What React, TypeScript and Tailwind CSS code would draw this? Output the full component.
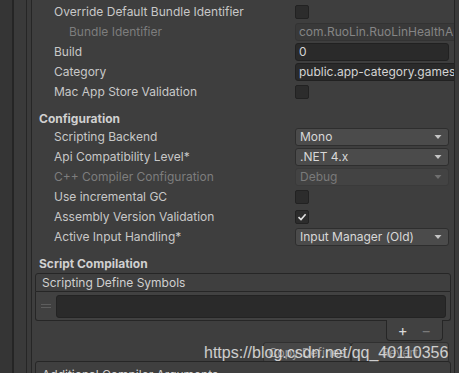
import React from "react";

const font = { fontFamily: "Inter, 'Noto Sans', sans-serif" };

function Row({ label, indent = 22, disabled = false, children }: { label: string; indent?: number; disabled?: boolean; children?: React.ReactNode }) {
  return (
    <div className="flex h-[20px] items-center">
      <div
        className={`w-[263px] shrink-0 truncate text-[12px] leading-[20px] ${disabled ? "text-[#7d7d7d]" : "text-[#c8c8c8]"}`}
        style={{ paddingLeft: indent }}
      >
        {label}
      </div>
      <div className="flex flex-1 items-center pr-[5px]">{children}</div>
    </div>
  );
}

function Check({ checked = false }: { checked?: boolean }) {
  return (
    <div className="flex h-[14px] w-[14px] items-center justify-center rounded-[2px] border border-[#222] bg-[#2c2c2c]">
      {checked && (
        <svg width="10" height="10" viewBox="0 0 10 10">
          <path d="M1.5 5.2 L4 7.6 L8.6 2.2" stroke="#e0e0e0" strokeWidth="1.6" fill="none" />
        </svg>
      )}
    </div>
  );
}

function TextField({ value, disabled = false }: { value: string; disabled?: boolean }) {
  return (
    <div
      className={`h-[18px] w-full overflow-hidden whitespace-nowrap rounded-[3px] border px-[3px] text-[12px] leading-[16px] ${
        disabled ? "border-[#333] bg-[#393939] text-[#858585]" : "border-[#212121] bg-[#2a2a2a] text-[#d4d4d4]"
      }`}
    >
      {value}
    </div>
  );
}

function Dropdown({ value, disabled = false }: { value: string; disabled?: boolean }) {
  return (
    <div
      className={`flex h-[18px] w-full items-center justify-between rounded-[3px] border pl-[4px] pr-[6px] text-[12px] leading-[16px] ${
        disabled ? "border-[#3a3a3a] bg-[#434343] text-[#7a7a7a]" : "border-[#2e2e2e] bg-[#4b4b4b] text-[#d8d8d8]"
      }`}
    >
      <span>{value}</span>
      <svg width="8" height="6" viewBox="0 0 8 6">
        <path d="M0.5 1 L7.5 1 L4 5 Z" fill={disabled ? "#6e6e6e" : "#c4c4c4"} />
      </svg>
    </div>
  );
}

export default function App() {
  return (
    <div className="relative flex h-[373px] w-[459px] overflow-hidden bg-[#3c3c3c]" style={font}>
      <div className="w-[12px] shrink-0 bg-[#353535]" />
      <div className="w-[2px] shrink-0 bg-[#252525]" />
      <div className="w-[12px] shrink-0 bg-[#3a3a3a]" />
      <div className="w-[1px] shrink-0 bg-[#262626]" />
      <div className="w-[4px] shrink-0 bg-[#3b3b3b]" />
      <div className="w-[1px] shrink-0 bg-[#262626]" />
      <div className="flex w-[422px] shrink-0 flex-col bg-[#3e3e3e] pt-[2px]">
        <Row label="Override Default Bundle Identifier">
          <Check />
        </Row>
        <Row label="Bundle Identifier" indent={37} disabled>
          <TextField value="com.RuoLin.RuoLinHealthApp" disabled />
        </Row>
        <Row label="Build">
          <TextField value="0" />
        </Row>
        <Row label="Category">
          <TextField value="public.app-category.games" />
        </Row>
        <Row label="Mac App Store Validation">
          <Check />
        </Row>
        <div className="h-[25px] pl-[7px] pt-[8px] text-[12px] font-bold leading-[18px] text-[#d0d0d0]">Configuration</div>
        <Row label="Scripting Backend">
          <Dropdown value="Mono" />
        </Row>
        <Row label="Api Compatibility Level*">
          <Dropdown value=".NET 4.x" />
        </Row>
        <Row label="C++ Compiler Configuration" disabled>
          <Dropdown value="Debug" disabled />
        </Row>
        <Row label="Use incremental GC">
          <Check />
        </Row>
        <Row label="Assembly Version Validation">
          <Check checked />
        </Row>
        <Row label="Active Input Handling*">
          <Dropdown value="Input Manager (Old)" />
        </Row>
        <div className="h-[27px] pl-[7px] pt-[8px] text-[12px] font-bold leading-[18px] text-[#d0d0d0]">Script Compilation</div>
        <div className="ml-[3px] mr-[3px] flex flex-col">
          <div className="h-[19px] rounded-t-[3px] border border-[#262626] bg-[#3f3f3f] pl-[6px] text-[12px] leading-[18px] text-[#d0d0d0]">
            Scripting Define Symbols
          </div>
          <div className="flex h-[29px] items-center rounded-b-[3px] border border-t-0 border-[#262626] bg-[#414141] pl-[5px] pr-[4px]">
            <div className="flex w-[11px] flex-col gap-[2px]">
              <div className="h-[1px] w-[10px] bg-[#5e5e5e]" />
              <div className="h-[1px] w-[10px] bg-[#5e5e5e]" />
            </div>
            <div className="ml-[4px] h-[23px] flex-1 rounded-[3px] border border-[#232323] bg-[#2a2a2a]" />
          </div>
          <div className="flex justify-end pr-[8px]">
            <div className="-mt-[1px] flex h-[21px] w-[57px] items-center justify-around rounded-b-[4px] border border-t-0 border-[#262626] bg-[#414141] px-[4px] text-[15px] leading-none">
              <span className="text-[#d8d8d8]">+</span>
              <span className="text-[#7a7a7a]">−</span>
            </div>
          </div>
          <div className="mt-[1px] flex h-[21px] justify-end gap-0 pr-[2px]">
            <div className="flex h-[21px] w-[88px] items-center justify-center rounded-[3px] border border-[#303030] bg-[#474747] text-[12px] text-[#9a9a9a]">
              Copy Defines
            </div>
            <div className="flex h-[21px] w-[98px] items-center justify-center rounded-[3px] border border-[#303030] bg-[#474747] text-[12px] text-[#8a8a8a]">
              Revert
            </div>
          </div>
          <div className="mt-[-2px] h-[20px] rounded-t-[3px] border border-[#262626] bg-[#3f3f3f] pl-[6px] pt-[4px] text-[12px] leading-[17px] text-[#d0d0d0]">
            Additional Compiler Arguments
          </div>
        </div>
      </div>
      <div className="w-[1px] shrink-0 bg-[#242424]" />
      <div className="flex-1 bg-[#3a3a3a]" />
      <div
        className="pointer-events-none absolute left-[204px] top-[343px] whitespace-nowrap text-[16px] leading-[20px] text-[#e6e6e6] opacity-[0.85]"
        style={{ fontFamily: "'Liberation Sans', Arial, sans-serif" }}
      >
        https://blog.csdn.net/qq_40110356
      </div>
    </div>
  );
}
